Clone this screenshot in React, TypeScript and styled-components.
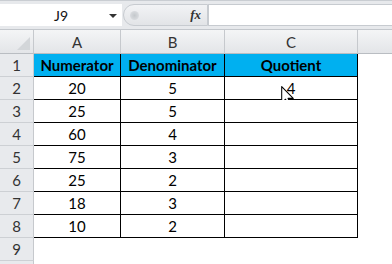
import styled, { createGlobalStyle } from "styled-components";

const GlobalStyle = createGlobalStyle`
    body {
        margin: 0;
        background: #ffffff;
        font-family: Lato, "Open Sans", sans-serif;
    }
`

const Window = styled.div`
    width: 392px;
    height: 264px;
    overflow: hidden;
    position: relative;
    background: #ffffff;
`

const FormulaBar = styled.div`
    height: 30px;
    box-sizing: border-box;
    display: flex;
    align-items: stretch;
    padding: 3px 0 3px 0;
    background: #e7e9ec;
    border-top: 1px solid #c9cdd2;
    border-bottom: 1px solid #c3c7cc;
`

const NameBox = styled.div`
    width: 122px;
    display: flex;
    align-items: center;
    justify-content: center;
    position: relative;
    background: #ffffff;
    font-size: 14px;
    color: #111;
`

const DropArrow = styled.span`
    position: absolute;
    right: 5px;
    top: 10px;
    width: 0;
    height: 0;
    border-left: 4px solid transparent;
    border-right: 4px solid transparent;
    border-top: 4px solid #333;
`

const Pill = styled.div`
    width: 85px;
    display: flex;
    align-items: center;
    justify-content: space-between;
    padding: 0 6px 0 6px;
    box-sizing: border-box;
    background: linear-gradient(#f2f3f5, #e2e4e7);
    border: 1px solid #c7cbd0;
    border-radius: 12px 0 0 12px;
    margin-left: 1px;
`

const Grip = styled.span`
    width: 9px;
    height: 9px;
    border-radius: 50%;
    background: radial-gradient(#c4c8cc, #e2e4e7);
`

const Fx = styled.span`
    font-family: "Liberation Serif", serif;
    font-style: italic;
    font-weight: bold;
    font-size: 13px;
    color: #333;
`

const FormulaInput = styled.div`
    flex: 1;
    background: #ffffff;
    border: 1px solid #c7cbd0;
    border-right: none;
`

const Sheet = styled.div`
    display: grid;
    grid-template-columns: 34px 87px 104px 133px 90px;
    grid-template-rows: 24px;
    grid-auto-rows: 23px;
`

const ColHead = styled.div`
    box-sizing: border-box;
    display: flex;
    align-items: center;
    justify-content: center;
    position: relative;
    background: linear-gradient(#f4f5f6, #e3e5e8);
    border-right: 1px solid #c6c9cd;
    border-bottom: 1px solid #b9bdc2;
    font-size: 15px;
    color: #333;
`

const Corner = styled.span`
    position: absolute;
    right: 3px;
    bottom: 3px;
    width: 0;
    height: 0;
    border-left: 13px solid transparent;
    border-bottom: 13px solid #d3d6d9;
`

const RowHead = styled.div`
    box-sizing: border-box;
    display: flex;
    align-items: center;
    justify-content: center;
    background: #e8eaed;
    border-right: 1px solid #c6c9cd;
    border-bottom: 1px solid #cdd0d4;
    font-size: 15px;
    color: #333;
`

const Cell = styled.div<{ $boxed?: boolean; $head?: boolean }>`
    box-sizing: border-box;
    display: flex;
    align-items: center;
    justify-content: center;
    position: relative;
    font-size: 15px;
    color: #000;
    font-weight: ${p => (p.$head ? "bold" : "normal")};
    background: ${p => (p.$head ? "#00b0f0" : "#ffffff")};
    border-right: 1px solid ${p => (p.$boxed ? "#000" : "transparent")};
    border-bottom: 1px solid ${p => (p.$boxed ? "#000" : "transparent")};
`

const Pointer = styled.svg`
    position: absolute;
    left: 56px;
    top: 9px;
`

const rows = [
    ["Numerator", "Denominator", "Quotient"],
    ["20", "5", "4"],
    ["25", "5", ""],
    ["60", "4", ""],
    ["75", "3", ""],
    ["25", "2", ""],
    ["18", "3", ""],
    ["10", "2", ""],
]

export default function App() {
    return (
        <Window>
            <GlobalStyle />
            <FormulaBar>
                <NameBox>
                    J9
                    <DropArrow />
                </NameBox>
                <Pill>
                    <Grip />
                    <Fx>fx</Fx>
                </Pill>
                <FormulaInput />
            </FormulaBar>
            <Sheet>
                <ColHead><Corner /></ColHead>
                <ColHead>A</ColHead>
                <ColHead>B</ColHead>
                <ColHead>C</ColHead>
                <ColHead />
                {rows.map((r, i) => (
                    <>
                        <RowHead key={"h" + i}>{i + 1}</RowHead>
                        {r.map((v, j) => (
                            <Cell key={i + "-" + j} $boxed $head={i === 0}>
                                {v}
                                {i === 1 && j === 2 && (
                                    <Pointer width="14" height="21" viewBox="0 0 13 20">
                                        <path
                                            d="M0.5 0.5 L0.5 16 L4.2 12.6 L6.8 18.6 L9 17.6 L6.5 11.8 L11.5 11.8 Z"
                                            fill="#ffffff"
                                            stroke="#000"
                                            strokeWidth="1"
                                            strokeLinejoin="round"
                                        />
                                    </Pointer>
                                )}
                            </Cell>
                        ))}
                        <Cell key={"d" + i} />
                    </>
                ))}
                <RowHead>9</RowHead>
                <Cell />
                <Cell />
                <Cell />
                <Cell />
                <RowHead />
                <Cell />
                <Cell />
                <Cell />
                <Cell />
            </Sheet>
        </Window>
    )
}
